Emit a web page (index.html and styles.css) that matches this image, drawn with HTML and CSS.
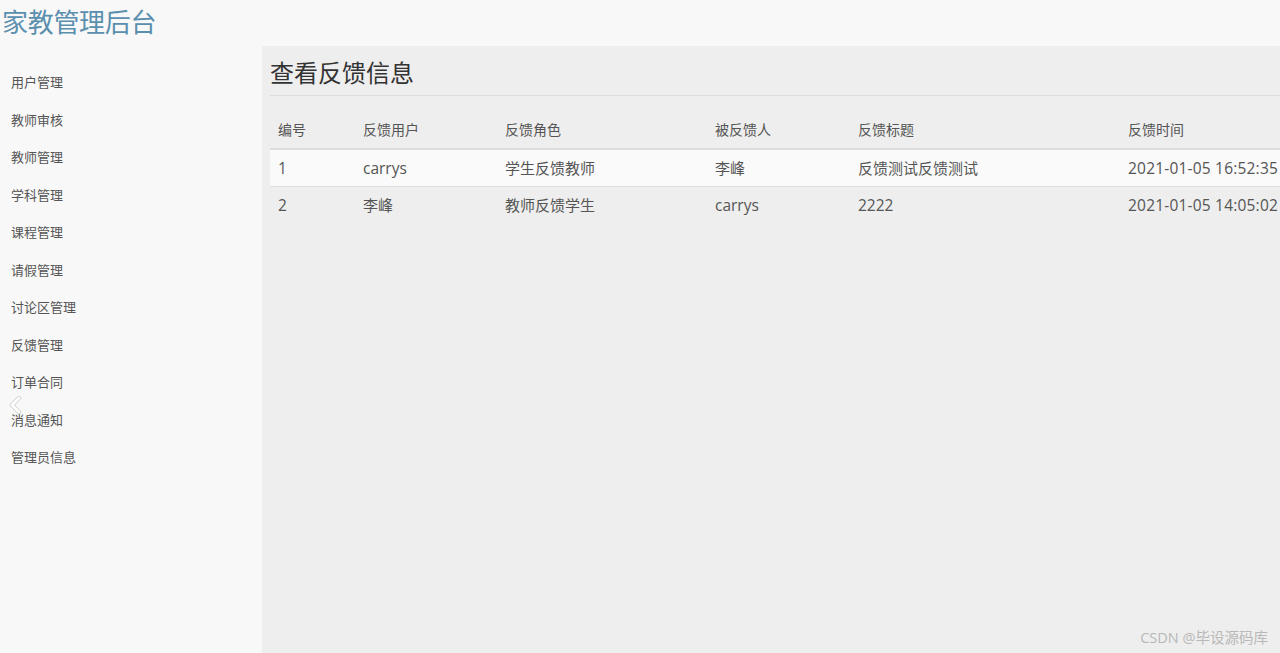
FILE: index.html
```html
<!DOCTYPE html>
<html lang="zh">
<head>
<meta charset="utf-8">
<title>家教管理后台</title>
<link rel="stylesheet" href="styles.css">
</head>
<body>
<div class="page">
  <header class="topbar">
    <h1 class="brand">家教管理后台</h1>
  </header>
  <div class="body">
    <nav class="sidebar">
      <a class="nav-item">用户管理</a>
      <a class="nav-item">教师审核</a>
      <a class="nav-item">教师管理</a>
      <a class="nav-item">学科管理</a>
      <a class="nav-item">课程管理</a>
      <a class="nav-item">请假管理</a>
      <a class="nav-item">讨论区管理</a>
      <a class="nav-item">反馈管理</a>
      <a class="nav-item">订单合同</a>
      <a class="nav-item">消息通知</a>
      <a class="nav-item">管理员信息</a>
      <svg class="chevron" width="14" height="20" viewBox="0 0 14 20">
        <polyline points="10,3 3,10 10,17" fill="none" stroke="#cfcfcf" stroke-width="4.4" stroke-linecap="round" stroke-linejoin="round"/>
        <polyline points="10,3 3,10 10,17" fill="none" stroke="#ffffff" stroke-width="2.8" stroke-linecap="round" stroke-linejoin="round"/>
      </svg>
    </nav>
    <main class="main">
      <h2 class="page-title">查看反馈信息</h2>
      <table class="grid">
        <colgroup>
          <col class="c1"><col class="c2"><col class="c3"><col class="c4"><col class="c5"><col class="c6">
        </colgroup>
        <thead>
          <tr><th>编号</th><th>反馈用户</th><th>反馈角色</th><th>被反馈人</th><th>反馈标题</th><th>反馈时间</th></tr>
        </thead>
        <tbody>
          <tr class="odd"><td class="num">1</td><td class="num">carrys</td><td>学生反馈教师</td><td>李峰</td><td>反馈测试反馈测试</td><td class="num time">2021-01-05 16:52:35</td></tr>
          <tr><td class="num">2</td><td>李峰</td><td>教师反馈学生</td><td class="num">carrys</td><td class="num">2222</td><td class="num time">2021-01-05 14:05:02</td></tr>
        </tbody>
      </table>
    </main>
  </div>
  <div class="watermark">CSDN @毕设源码库</div>
</div>
</body>
</html>
```

FILE: styles.css
```css
* { box-sizing: border-box; }
html, body {
  margin: 0;
  padding: 0;
  width: 1280px;
  height: 653px;
  overflow: hidden;
  background: #f8f8f8;
  font-family: "Open Sans", "Noto Sans CJK SC", sans-serif;
  color: #555;
}
.page {
  position: relative;
  width: 1280px;
  height: 653px;
  display: flex;
  flex-direction: column;
}
.topbar {
  height: 46px;
  flex: none;
}
.brand {
  margin: 0;
  padding: 4px 0 0 2px;
  font-size: 26px;
  line-height: 36px;
  font-weight: normal;
  color: #5b8fae;
  letter-spacing: -0.3px;
}
.body {
  flex: 1;
  display: flex;
  min-height: 0;
}
.sidebar {
  position: relative;
  width: 262px;
  flex: none;
  padding-top: 18px;
  display: flex;
  flex-direction: column;
}
.nav-item {
  display: block;
  height: 37.5px;
  line-height: 37.5px;
  padding-left: 11px;
  font-size: 13px;
  color: #555;
  text-decoration: none;
}
.chevron {
  position: absolute;
  left: 9px;
  top: 349px;
}
.main {
  flex: 1;
  background: #eeeeee;
  padding: 10px 0 0 8px;
  overflow: hidden;
}
.page-title {
  margin: 0;
  font-size: 24px;
  line-height: 34px;
  font-weight: normal;
  color: #333;
  padding-bottom: 5px;
  border-bottom: 1px solid #dddddd;
}
.grid {
  margin-top: 16px;
  width: 1010px;
  table-layout: fixed;
  border-collapse: collapse;
}
.c1 { width: 85px; }
.c2 { width: 142px; }
.c3 { width: 210px; }
.c4 { width: 143px; }
.c5 { width: 270px; }
.c6 { width: 160px; }
.grid th {
  text-align: left;
  font-weight: normal;
  font-size: 14px;
  line-height: 20px;
  padding: 8px;
  color: #555;
  border-bottom: 2px solid #dddddd;
  white-space: nowrap;
}
.grid td {
  font-size: 15px;
  line-height: 20px;
  padding: 8px;
  color: #555;
  border-top: 1px solid #dddddd;
  white-space: nowrap;
}
.grid td.num { font-size: 15.5px; }
.grid td.time { letter-spacing: 0.2px; }
.grid tbody tr:first-child td { border-top: 0; }
.grid tr.odd td { background: #fafafa; }
.watermark {
  position: absolute;
  right: 12px;
  bottom: 6px;
  font-size: 14.5px;
  line-height: 18px;
  color: #b8b8b8;
}
```
